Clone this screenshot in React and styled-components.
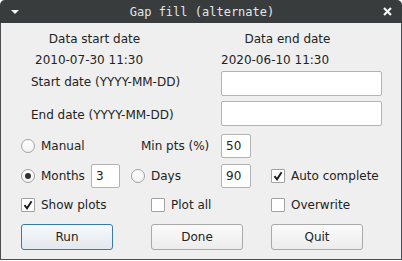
import React from 'react';
import styled, { createGlobalStyle } from 'styled-components';

const GlobalStyle = createGlobalStyle`
  body {
    margin: 0;
    background: #ffffff;
    font-family: "DejaVu Sans", "Liberation Sans", sans-serif;
  }
`;

const Window = styled.div`
  width: 402px;
  height: 260px;
  display: flex;
  flex-direction: column;
  border-radius: 5px 5px 0 0;
  overflow: hidden;
`;

const TitleBar = styled.div`
  height: 23px;
  flex: none;
  background: #383c3d;
  display: flex;
  align-items: center;
  justify-content: space-between;
  padding: 0 10px 0 11px;
  color: #e2e7ea;
  font-family: "DejaVu Sans Mono", "Liberation Mono", monospace;
  font-size: 12px;
`;

const TitleText = styled.span`
  flex: 1;
  text-align: center;
  padding-left: 2px;
`;

const Body = styled.div`
  flex: 1;
  background: #efefef;
  border: 1px solid #4b4e50;
  border-top: none;
  padding: 7px 0 0 20px;
  display: flex;
  flex-direction: column;
  color: #232323;
  font-size: 12px;
`;

const Row = styled.div`
  display: flex;
  align-items: center;
  height: ${(p) => p.h}px;
  margin-bottom: ${(p) => p.gap || 0}px;
`;

const Cell = styled.div`
  width: ${(p) => (p.w ? `${p.w}px` : 'auto')};
  flex: none;
  text-align: ${(p) => p.align || 'left'};
  padding-left: ${(p) => p.pl || 0}px;
  margin-top: ${(p) => p.dy || 0}px;
  white-space: nowrap;
  box-sizing: border-box;
  display: flex;
  align-items: center;
  justify-content: ${(p) => (p.align === 'center' ? 'center' : 'flex-start')};
`;

const Input = styled.div`
  width: ${(p) => p.w}px;
  height: ${(p) => p.h}px;
  box-sizing: border-box;
  background: #ffffff;
  border: 1px solid #b3b3b3;
  border-radius: 2px;
  display: flex;
  align-items: center;
  padding-left: 4px;
  font-size: 12px;
  color: #1e1e1e;
`;

const Radio = styled.span`
  width: 14px;
  height: 14px;
  box-sizing: border-box;
  border-radius: 50%;
  border: 1px solid #a2a2a2;
  background: linear-gradient(#ffffff, #f2f2f2);
  display: inline-flex;
  align-items: center;
  justify-content: center;
  margin-right: 6px;
  flex: none;

  &::after {
    content: '';
    width: 6px;
    height: 6px;
    border-radius: 50%;
    background: ${(p) => (p.checked ? '#303030' : 'transparent')};
  }
`;

const Box = styled.span`
  width: 14px;
  height: 14px;
  box-sizing: border-box;
  border: 1px solid #a2a2a2;
  border-radius: 1px;
  background: #ffffff;
  display: inline-flex;
  align-items: center;
  justify-content: center;
  margin-right: 6px;
  flex: none;
`;

const Button = styled.div`
  width: 92px;
  height: 26px;
  box-sizing: border-box;
  border: 1px solid ${(p) => (p.focused ? '#3a78ad' : '#a9a9a9')};
  border-radius: 3px;
  background: ${(p) =>
    p.focused
      ? 'linear-gradient(#f7f9fb, #e3e8ee)'
      : 'linear-gradient(#fbfbfb, #ececec)'};
  display: flex;
  align-items: center;
  justify-content: center;
  font-size: 12px;
  color: #232323;
  flex: none;
`;

const Check = () => (
  <svg width="12" height="12" viewBox="0 0 12 12">
    <path d="M2.5 6.2 L5 9.3 L9.6 2.2" fill="none" stroke="#1e1e1e" strokeWidth="1.9" />
  </svg>
);

function Checkbox({ checked, label }) {
  return (
    <>
      <Box>{checked && <Check />}</Box>
      {label}
    </>
  );
}

export default function App() {
  return (
    <>
      <GlobalStyle />
      <Window>
        <TitleBar>
          <svg width="8" height="4" viewBox="0 0 8 4">
            <path d="M0 0 H8 L4 4 Z" fill="#f4f6f7" />
          </svg>
          <TitleText>Gap fill (alternate)</TitleText>
          <svg width="9" height="9" viewBox="0 0 9 9">
            <path d="M1 1 L8 8 M8 1 L1 8" stroke="#f4f6f7" strokeWidth="2.2" />
          </svg>
        </TitleBar>
        <Body>
          <Row h={18} gap={3}>
            <Cell w={147} align="center">Data start date</Cell>
            <Cell w={53} />
            <Cell w={133} align="center">Data end date</Cell>
          </Row>
          <Row h={18} gap={2}>
            <Cell w={200} pl={14}>2010-07-30 11:30</Cell>
            <Cell>2020-06-10 11:30</Cell>
          </Row>
          <Row h={25} gap={5}>
            <Cell w={200} pl={10} dy={-4}>Start date (YYYY-MM-DD)</Cell>
            <Input w={161} h={25} />
          </Row>
          <Row h={25} gap={8}>
            <Cell w={200} pl={10} dy={3}>End date (YYYY-MM-DD)</Cell>
            <Input w={161} h={25} />
          </Row>
          <Row h={24} gap={6}>
            <Cell w={120}>
              <Radio />
              Manual
            </Cell>
            <Cell w={80}>Min pts (%)</Cell>
            <Input w={30} h={24}>50</Input>
          </Row>
          <Row h={24} gap={8}>
            <Cell w={70}>
              <Radio checked />
              Months
            </Cell>
            <Input w={29} h={24}>3</Input>
            <Cell w={11} />
            <Cell w={90}>
              <Radio />
              Days
            </Cell>
            <Input w={30} h={24}>90</Input>
            <Cell w={20} />
            <Cell>
              <Checkbox checked label="Auto complete" />
            </Cell>
          </Row>
          <Row h={18} gap={10}>
            <Cell w={130}>
              <Checkbox checked label="Show plots" />
            </Cell>
            <Cell w={120}>
              <Checkbox label="Plot all" />
            </Cell>
            <Cell>
              <Checkbox label="Overwrite" />
            </Cell>
          </Row>
          <Row h={26}>
            <Button focused>Run</Button>
            <Cell w={38} />
            <Button>Done</Button>
            <Cell w={28} />
            <Button>Quit</Button>
          </Row>
        </Body>
      </Window>
    </>
  );
}
